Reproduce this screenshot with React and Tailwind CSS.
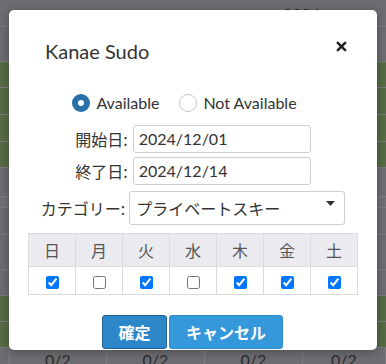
import React from "react";

const rows = [
  { h: "h-[27px]", bg: "bg-[#6d6d71]" },
  { h: "h-[35px]", bg: "bg-[#6d6d71]" },
  { h: "h-[26px]", bg: "bg-[#566b46]" },
  { h: "h-[27px]", bg: "bg-[#566b46]" },
  { h: "h-[27px]", bg: "bg-[#566b46]" },
  { h: "h-[26px]", bg: "bg-[#566b46]" },
  { h: "h-[29px]", bg: "bg-[#6d6d71]" },
  { h: "h-[11px]", bg: "bg-[#717175]" },
  { h: "h-[27px]", bg: "bg-[#6d6d71]" },
  { h: "h-[35px]", bg: "bg-[#6d6d71]" },
  { h: "h-[26px]", bg: "bg-[#6d6d71]" },
  { h: "h-[26px]", bg: "bg-[#566b46]" },
  { h: "h-[26px]", bg: "bg-[#566b46]" },
];

const days = [
  { d: "日", on: true },
  { d: "月", on: false },
  { d: "火", on: true },
  { d: "水", on: false },
  { d: "木", on: true },
  { d: "金", on: true },
  { d: "土", on: true },
];

const font = "font-['Lato','Noto_Sans_CJK_JP',sans-serif]";

const Radio = ({ checked, label }) => (
  <label className="flex items-center gap-[6px]">
    {checked ? (
      <span className="w-[18px] h-[18px] rounded-full bg-[#2770a8] flex items-center justify-center">
        <span className="w-[6px] h-[6px] rounded-full bg-white" />
      </span>
    ) : (
      <span className="w-[18px] h-[18px] rounded-full bg-white border border-[#c9c9c9]" />
    )}
    <span>{label}</span>
  </label>
);

export default function App() {
  return (
    <div className={`relative w-[386px] h-[364px] overflow-hidden bg-[#6d6d71] ${font}`}>
      {/* dimmed page behind the dialog */}
      <div className="flex flex-col">
        {rows.map((r, i) => (
          <div key={i} className={`${r.h} ${r.bg} border-b border-[#7c7c80] flex justify-end`}>
            {i === 0 && (
              <span className="mr-[66px] mt-[6px] text-[16px] leading-none font-bold text-[#2a2a2a]">2024</span>
            )}
          </div>
        ))}
        <div className="h-[16px] grid grid-cols-[10px_97px_98px_98px_83px] text-[16px] text-[#2b2b2d]">
          <div className="border-r border-[#7c7c80]" />
          {["0/2", "0/2", "0/2", "0/2"].map((t, i) => (
            <div key={i} className="border-r border-[#7c7c80] flex justify-center pt-[4px] leading-none">
              {t}
            </div>
          ))}
        </div>
      </div>

      {/* dialog */}
      <div className="absolute left-[9px] top-[10px] w-[368px] h-[340px] bg-white rounded-[5px] shadow-[0_2px_10px_rgba(0,0,0,0.3)] flex flex-col text-[#333]">
        <div className="flex justify-between items-start pl-[36px] pr-[30px] pt-[27px]">
          <h2 className="text-[20px] leading-[28px] text-[#333]">Kanae Sudo</h2>
          <svg width="11" height="11" viewBox="0 0 12 12" className="mt-[4px]">
            <path d="M2 2 L10 10 M10 2 L2 10" stroke="#222" strokeWidth="2.8" strokeLinecap="round" />
          </svg>
        </div>

        <div className="flex justify-center gap-[20px] mt-[29px] text-[16px] leading-[18px] pr-[17px]">
          <Radio checked label="Available" />
          <Radio label="Not Available" />
        </div>

        <div className="flex flex-col items-center mt-[13px] text-[16px]">
          <div className="flex items-center gap-[5px]">
            <span className="font-['Noto_Sans_CJK_JP',sans-serif]">開始日:</span>
            <div className="w-[178px] h-[28px] border border-[#cfcfcf] rounded-[3px] flex items-center px-[5px]">
              2024/12/01
            </div>
          </div>
          <div className="flex items-center gap-[5px] mt-[4px]">
            <span className="font-['Noto_Sans_CJK_JP',sans-serif]">終了日:</span>
            <div className="w-[178px] h-[28px] border border-[#cfcfcf] rounded-[3px] flex items-center px-[5px]">
              2024/12/14
            </div>
          </div>
          <div className="flex items-center gap-[4px] mt-[6px]">
            <span className="font-['Noto_Sans_CJK_JP',sans-serif]">カテゴリー:</span>
            <div className="w-[216px] h-[34px] border border-[#cfcfcf] rounded-[3px] flex items-center justify-between pl-[6px] pr-[9px]">
              <span className="font-['Noto_Sans_CJK_JP',sans-serif]">プライベートスキー</span>
              <svg width="9" height="5" viewBox="0 0 9 5" className="mt-[-10px]">
                <path d="M0 0 H9 L4.5 5 Z" fill="#333" />
              </svg>
            </div>
          </div>
        </div>

        <table className="mx-[19px] mt-[8px] w-[330px] border-collapse table-fixed">
          <thead>
            <tr className="bg-[#ebebef] h-[33px]">
              {days.map((x) => (
                <th
                  key={x.d}
                  className="border border-[#dcdcdc] font-normal text-[16px] text-[#555] font-['Noto_Sans_CJK_JP',sans-serif]"
                >
                  {x.d}
                </th>
              ))}
            </tr>
          </thead>
          <tbody>
            <tr className="h-[28px]">
              {days.map((x) => (
                <td key={x.d} className="border border-[#dcdcdc] text-center align-middle">
                  <input type="checkbox" defaultChecked={x.on} className="w-[13px] h-[13px] align-middle" />
                </td>
              ))}
            </tr>
          </tbody>
        </table>

        <div className="flex justify-center gap-[2px] mt-[20px] pr-[1px]">
          <button className="w-[65px] h-[34px] rounded-[3px] bg-[#2c87c8] border border-[#1f6394] text-white font-bold text-[16px] font-['Noto_Sans_CJK_JP',sans-serif]">
            確定
          </button>
          <button className="w-[114px] h-[34px] rounded-[3px] bg-[#3498db] border border-[#2e8bcb] text-white font-bold text-[16px] font-['Noto_Sans_CJK_JP',sans-serif]">
            キャンセル
          </button>
        </div>
      </div>
    </div>
  );
}
